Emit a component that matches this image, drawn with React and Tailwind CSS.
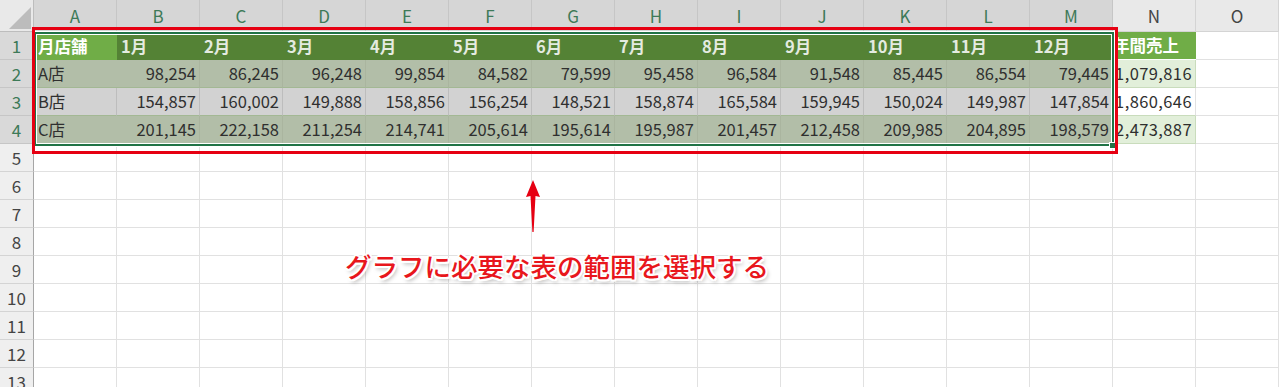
const COLS = ['A', 'B', 'C', 'D', 'E', 'F', 'G', 'H', 'I', 'J', 'K', 'L', 'M', 'N', 'O'];

const MONTHS = ['1月', '2月', '3月', '4月', '5月', '6月', '7月', '8月', '9月', '10月', '11月', '12月'];

const STORES = [
  {
    name: 'A店',
    values: ['98,254', '86,245', '96,248', '99,854', '84,582', '79,599', '95,458', '96,584', '91,548', '85,445', '86,554', '79,445'],
    total: '1,079,816',
  },
  {
    name: 'B店',
    values: ['154,857', '160,002', '149,888', '158,856', '156,254', '148,521', '158,874', '165,584', '159,945', '150,024', '149,987', '147,854'],
    total: '1,860,646',
  },
  {
    name: 'C店',
    values: ['201,145', '222,158', '211,254', '214,741', '205,614', '195,614', '195,987', '201,457', '212,458', '209,985', '204,895', '198,579'],
    total: '2,473,887',
  },
];

function ColHeader({ label, selected }) {
  return (
    <div
      className={
        selected
          ? 'flex items-center justify-center border-r border-b border-[#c6c6c6] bg-[#d6d6d6] text-[17px] text-[#3d7a58]'
          : 'flex items-center justify-center border-r border-b border-[#d4d4d4] bg-[#e9e9e9] text-[17px] text-[#444]'
      }
    >
      {label}
    </div>
  );
}

function RowHeader({ n, selected }) {
  return (
    <div
      className={
        selected
          ? 'flex items-center justify-center border-r border-b border-r-[#a6a6a6] border-b-[#c6c6c6] bg-[#d9d9d9] text-[17px] text-[#3d7a58]'
          : 'flex items-center justify-center border-r border-b border-r-[#a6a6a6] border-b-[#d4d4d4] bg-[#efefef] text-[17px] text-[#444]'
      }
    >
      {n}
    </div>
  );
}

function Empty() {
  return <div className="border-r border-b border-[#e1e1e1] bg-white" />;
}

function HeaderRow() {
  return (
    <>
      <RowHeader n={1} selected />
      <div className="flex items-center px-1 bg-[#70ad47] font-bold text-white text-[16.5px]">月店舗</div>
      {MONTHS.map((m) => (
        <div key={m} className="flex items-center px-1 bg-[#548235] font-bold text-[#e4ebe0] text-[16.5px]">
          {m}
        </div>
      ))}
      <div className="flex items-center overflow-hidden whitespace-nowrap bg-[#70ad47] font-bold text-white text-[16.5px] border-b border-white">
        年間売上
      </div>
      <Empty />
    </>
  );
}

function DataRow({ idx, store }) {
  const even = idx % 2 === 0;
  return (
    <>
      <RowHeader n={idx + 2} selected />
      <div
        className={
          even
            ? 'flex items-center px-1 bg-[#b2bea8] border-b border-[#a3b894] text-[#2f2f2f]'
            : 'flex items-center px-1 bg-[#d2d2d2] border-b border-r border-b-[#a3b894] border-r-[#bdbdbd] text-[#2f2f2f]'
        }
      >
        {store.name}
      </div>
      {store.values.map((v, i) => (
        <div
          key={i}
          className={
            even
              ? 'flex items-center justify-end pr-[3px] bg-[#b2bea8] border-b border-r border-b-[#a3b894] border-r-[#aab59f] text-[#2f2f2f]'
              : 'flex items-center justify-end pr-[3px] bg-[#d2d2d2] border-b border-r border-b-[#a3b894] border-r-[#bdbdbd] text-[#2f2f2f]'
          }
        >
          {v}
        </div>
      ))}
      <div
        className={
          even
            ? 'flex items-center justify-end overflow-hidden whitespace-nowrap pr-[3px] bg-[#e2efda] border-b border-r border-b-[#c9dcbc] border-r-[#c9dcbc] text-[#2f2f2f] tracking-[0.4px]'
            : 'flex items-center justify-end overflow-hidden whitespace-nowrap pr-[3px] bg-white border-b border-r border-b-[#c9dcbc] border-r-[#e1e1e1] text-[#2f2f2f] tracking-[0.4px]'
        }
      >
        {store.total}
      </div>
      <Empty />
    </>
  );
}

function EmptyRow({ n }) {
  return (
    <>
      <RowHeader n={n} />
      {COLS.map((c) => (
        <Empty key={c} />
      ))}
    </>
  );
}

export default function App() {
  const emptyRows = [5, 6, 7, 8, 9, 10, 11, 12, 13];

  return (
    <div className="relative w-[1280px] h-[387px] overflow-hidden bg-white font-['Noto_Sans_CJK_JP','Noto_Sans',sans-serif] text-[16.5px] leading-none">
      <div className="grid grid-cols-[34px_repeat(15,83px)] grid-rows-[32px_repeat(13,28px)]">
        <div className="relative border-r border-b border-[#bdbdbd] bg-[#e9e9e9]">
          <svg className="absolute right-[2px] bottom-[2px]" width="22" height="22" viewBox="0 0 22 22">
            <polygon points="22,0 22,22 0,22" fill="#bcbcbc" />
          </svg>
        </div>
        {COLS.map((c, i) => (
          <ColHeader key={c} label={c} selected={i < 13} />
        ))}

        <HeaderRow />
        {STORES.map((s, i) => (
          <DataRow key={s.name} idx={i} store={s} />
        ))}
        {emptyRows.map((n) => (
          <EmptyRow key={n} n={n} />
        ))}
      </div>

      {/* selection border */}
      <div className="absolute left-[34px] top-[32px] w-[1080px] h-[114px] border-2 border-[#217346] shadow-[0_0_0_1px_#ffffff,inset_0_0_0_1px_#ffffff]" />
      <div className="absolute left-[1109px] top-[142px] w-[7px] h-[7px] bg-[#217346] border border-white" />

      {/* red highlight box */}
      <div className="absolute left-[32px] top-[27px] w-[1086px] h-[127px] border-[3px] border-[#e60012]" />

      {/* arrow */}
      <svg className="absolute left-[522px] top-[178px]" width="22" height="58" viewBox="0 0 22 58">
        <polygon points="11,2 18,19 13.5,18 11.6,54 10.4,54 8.5,18 4,19" fill="#e60012" />
      </svg>

      {/* callout */}
      <div className="absolute left-[345px] top-[253px] text-[26.5px] font-medium leading-none text-[#e8161c] whitespace-nowrap [text-shadow:0_0_2px_#fff,2px_0_0_#fff,-2px_0_0_#fff,0_2px_0_#fff,0_-2px_0_#fff,1.5px_1.5px_0_#fff,-1.5px_-1.5px_0_#fff,1.5px_-1.5px_0_#fff,-1.5px_1.5px_0_#fff,2px_3px_4px_rgba(0,0,0,0.35)]">
        グラフに必要な表の範囲を選択する
      </div>
    </div>
  );
}
